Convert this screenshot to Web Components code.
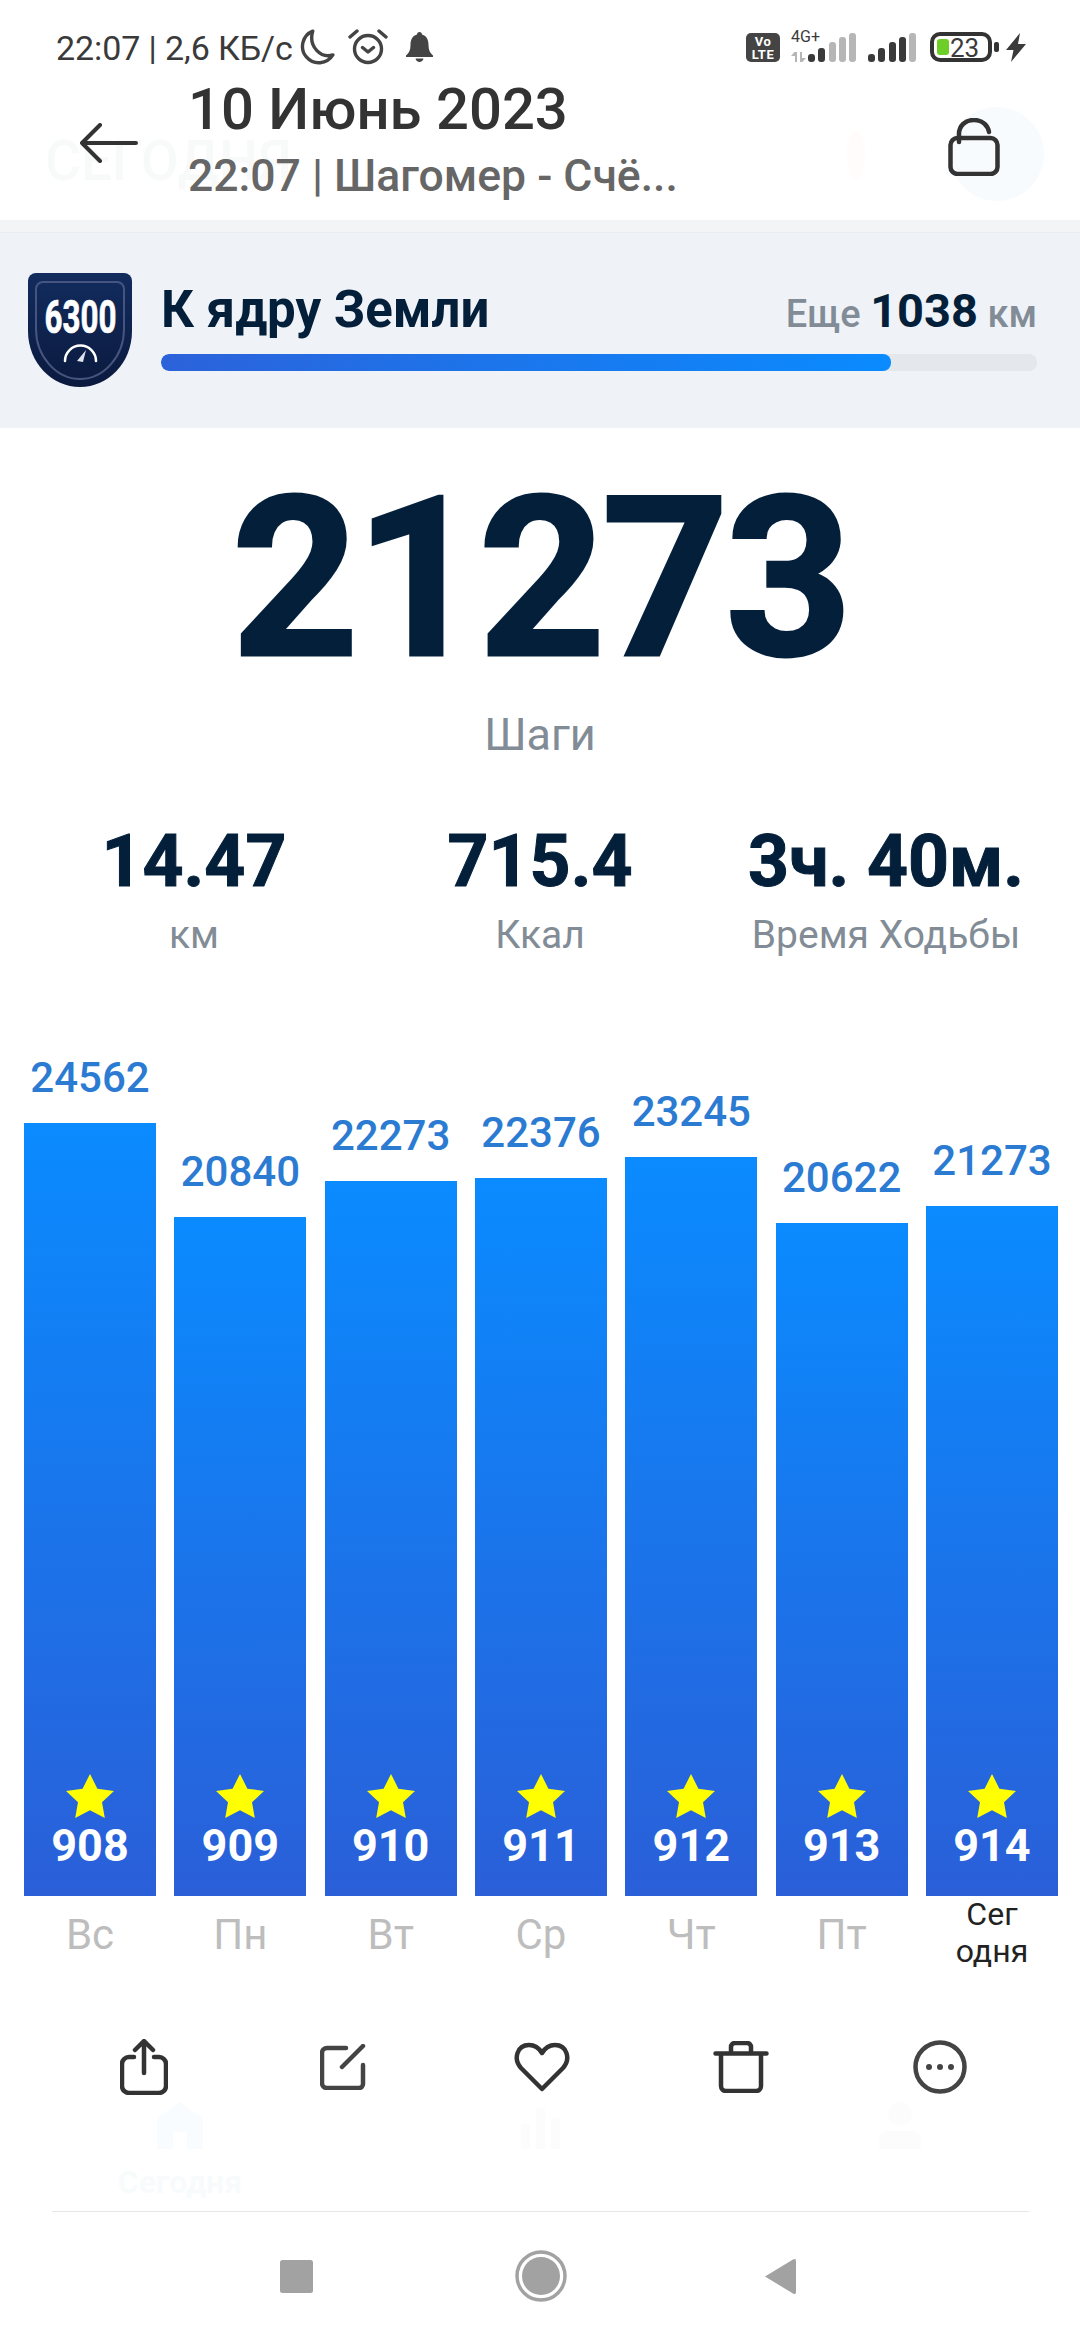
<!DOCTYPE html>
<html lang="ru">
<head>
<meta charset="utf-8">
<title>Шагомер</title>
<style>
   html, body { margin: 0; padding: 0; background: #fff; }
   body { width: 1080px; height: 2340px; overflow: hidden; font-family: Roboto, "Noto Sans", sans-serif; }
   step-screen { display: block; }
</style>
</head>
<body>
<step-screen></step-screen>
<script>
class StatusBar extends HTMLElement {
   constructor() {
      super();
      this.attachShadow({ mode: 'open' })
   }
   connectedCallback() {
      const bars = (dark) => [[0, 8], [10, 14], [21, 20], [31, 25], [41, 29]].map((b, i) =>
         `<rect x="${b[0]}" y="${29 - b[1]}" width="7" height="${b[1]}" rx="3" fill="${i < dark ? '#3a3a3a' : '#b6b6b6'}"/>`).join('');
      this.shadowRoot.innerHTML = /*html*/ `
      <style>
         :host { display: flex; align-items: flex-start; box-sizing: border-box; height: 77px; padding: 28px 54px 0 56px; color: #3a3a3a; position: relative; z-index: 1; }
         .time { font-size: 34px; line-height: 40px; white-space: nowrap; letter-spacing: -0.1px; }
         svg { display: block; flex: none; }
         .moon { margin: 1px 0 0 6px; }
         .alarm { margin: 0 0 0 13px; }
         .bell { margin: 4px 0 0 18px; }
         .right { margin-left: auto; display: flex; align-items: flex-start; padding-top: 5px; }
         .volte { width: 34px; height: 29px; border-radius: 5px; background: #444; color: #fff; font: 700 13px/13px Roboto, sans-serif; text-align: center; padding-top: 2px; box-sizing: border-box; letter-spacing: .5px; }
         .net { position: relative; width: 17px; height: 29px; margin-left: 11px; }
         .net span { position: absolute; left: 0; top: -5px; font-size: 16px; line-height: 18px; }
         .net .arrows { position: absolute; left: 0; top: 19px; }
         .sig { margin-right: 12px; }
         .sig2 { margin-right: 14px; }
         .battery { position: relative; box-sizing: border-box; width: 62px; height: 30px; border: 4px solid #333; border-radius: 10px; font-size: 26px; line-height: 24px; padding-left: 16px; margin-top: -1px; }
         .battery i { position: absolute; left: 3px; top: 3px; width: 12px; height: 16px; background: #6cce26; border-radius: 3px; }
         .battery b { position: relative; font-weight: 400; }
         .nub { width: 5px; height: 10px; background: #333; border-radius: 2px; margin: 9px 0 0 2px; }
         .bolt { margin-left: 7px; }
      </style>
      <span class="time">22:07 | 2,6 КБ/с</span>
      <svg class="moon" width="36" height="36" viewBox="0 0 34 34" fill="none" stroke="#444" stroke-width="3.200" stroke-linejoin="round"><path d="M13 2A15.500 15.500 0 1 0 32 24.500C21 28 8.500 17 13 2Z"/></svg>
      <svg class="alarm" width="40" height="37" viewBox="0 0 40 37" fill="none" stroke="#444" stroke-width="3.400" stroke-linecap="round" stroke-linejoin="round"><circle cx="20" cy="21" r="13.500"/><path d="M14.500 19.500 20 24l5.500-4.500M2 9l7-6M38 9l-7-6"/></svg>
      <svg class="bell" width="27" height="30" viewBox="0 0 27 30" fill="#444"><path d="M13.500 0c1.500 0 2.500 1 2.500 2.500C21 4 22.500 8 22.500 13c0 5 1.500 8 4.500 10.500V25H0v-1.500C3 21 4.500 18 4.500 13 4.500 8 6 4 11 2.500 11 1 12 0 13.500 0ZM9.500 26.500h8c-.5 2-2 3.500-4 3.500s-3.500-1.500-4-3.500Z"/></svg>
      <div class="right">
         <div class="volte">Vo<br>LTE</div>
         <div class="net">
            <span>4G+</span>
            <svg class="arrows" width="15" height="10" viewBox="0 0 15 10" fill="#b6b6b6"><path d="M0 4 3.500 0 6 0 6 10 4 10 4 4ZM15 6l-3.500 4H9V0h2v6Z"/></svg>
         </div>
         <svg class="sig" width="48" height="29" viewBox="0 0 48 29">${bars(2)}</svg>
         <svg class="sig2" width="48" height="29" viewBox="0 0 48 29">${bars(4)}</svg>
         <div class="battery"><i></i><b>23</b></div>
         <div class="nub"></div>
         <svg class="bolt" width="20" height="29" viewBox="0 0 20 29" fill="#3a3a3a"><path d="M14 0 0 17h7.500L5 29 20 11h-8Z"/></svg>
      </div>
      `;
   }
}
window.customElements.define("status-bar", StatusBar);

class AppHeader extends HTMLElement {
   constructor() {
      super();
      this.attachShadow({ mode: 'open' })
   }
   connectedCallback() {
      this.shadowRoot.innerHTML = /*html*/ `
      <style>
         :host { display: flex; align-items: center; box-sizing: border-box; height: 143px; padding: 0 80px; position: relative; }
         .ghost { position: absolute; left: 45px; top: 49px; font-size: 55px; line-height: 70px; font-weight: 500; color: #f8fafa; }
         .halo { position: absolute; left: 950px; top: 30px; width: 94px; height: 94px; border-radius: 50%; background: #f8fbfe; }
         .glow { position: absolute; left: 847px; top: 53px; width: 18px; height: 50px; border-radius: 50%; background: #fffcfb; }
         svg { display: block; flex: none; position: relative; }
         .back { margin-bottom: 11px; }
         .txt { position: relative; margin: 0 0 12px 50px; }
         .title { font-size: 58px; line-height: 64px; font-weight: 500; color: #333; white-space: nowrap; }
         .sub { font-size: 44.500px; line-height: 64px; margin-top: 3px; font-weight: 500; color: #666; white-space: nowrap; }
         .lock { margin: 0 0 3px auto; }
      </style>
      <div class="ghost">СЕГОДНЯ</div>
      <div class="halo"></div>
      <div class="glow"></div>
      <svg class="back" width="58" height="40" viewBox="0 0 58 40" fill="none" stroke="#333" stroke-width="4" stroke-linecap="round" stroke-linejoin="round"><path d="M20 2 2 20l18 18M2 20h54"/></svg>
      <div class="txt">
         <div class="title">10 Июнь 2023</div>
         <div class="sub">22:07 | Шагомер - Счё...</div>
      </div>
      <svg class="lock" width="52" height="58" viewBox="0 0 52 58" fill="none" stroke="#333" stroke-width="4.500" stroke-linecap="round" stroke-linejoin="round"><rect x="2.500" y="20" width="47" height="36" rx="7"/><path d="M11 24V16C11 8 17 2 26 2s14 6 15 12"/></svg>
      `;
   }
}
window.customElements.define("app-header", AppHeader);

class GoalCard extends HTMLElement {
   constructor() {
      super();
      this.attachShadow({ mode: 'open' })
   }
   connectedCallback() {
      this.shadowRoot.innerHTML = /*html*/ `
      <style>
         :host { display: block; }
         .strip { height: 12px; background: #f3f4f6; border-bottom: 1px solid #e9ebee; }
         .card { display: flex; align-items: flex-start; height: 195px; box-sizing: border-box; background: #eff2f7; padding: 40px 43px 0 28px; }
         svg { display: block; flex: none; }
         .main { flex: 1; margin: 7px 0 0 29px; }
         .row { display: flex; justify-content: space-between; align-items: baseline; height: 60px; line-height: 60px; white-space: nowrap; }
         .name { font-size: 51px; font-weight: 700; color: #031f3a; }
         .left { font-size: 38px; font-weight: 500; color: #828c96; }
         .left b { font-size: 47px; font-weight: 700; color: #031f3a; }
         .track { height: 17px; border-radius: 8px; background: #e4e7eb; margin-top: 14px; overflow: hidden; }
         .fill { width: 730px; height: 100%; border-radius: 8px; background: linear-gradient(90deg, #2c62da, #0a8bff); }
      </style>
      <div class="strip"></div>
      <div class="card">
         <svg width="104" height="114" viewBox="0 0 104 114">
            <defs><linearGradient id="b" x1="0" y1="0" x2="0" y2="1"><stop offset="0" stop-color="#122c5e"/><stop offset="1" stop-color="#0b1a3e"/></linearGradient></defs>
            <path d="M8 0h88a8 8 0 0 1 8 8v50c0 32-24 56-52 56S0 90 0 58V8a8 8 0 0 1 8-8Z" fill="url(#b)"/>
            <path d="M15 9h74a7 7 0 0 1 7 7v40c0 27-20 50-44 50S8 83 8 56V16a7 7 0 0 1 7-7Z" fill="none" stroke="#46557f" stroke-width="2"/>
            <text x="52.500" y="60" text-anchor="middle" textLength="72" lengthAdjust="spacingAndGlyphs" font-family="Roboto, sans-serif" font-weight="700" font-size="46" fill="#fff" stroke="#fff" stroke-width=".7">6300</text>
            <path d="M37 88A15.500 15.500 0 0 1 68 88" fill="none" stroke="#fff" stroke-width="2.500" stroke-linecap="round"/>
            <path d="M49 88l9-11-3 12Z" fill="#dfe4ee"/>
         </svg>
         <div class="main">
            <div class="row">
               <span class="name">К ядру Земли</span>
               <span class="left">Еще <b>1038</b> км</span>
            </div>
            <div class="track"><div class="fill"></div></div>
         </div>
      </div>
      `;
   }
}
window.customElements.define("goal-card", GoalCard);

class StepTotal extends HTMLElement {
   constructor() {
      super();
      this.attachShadow({ mode: 'open' })
   }
   connectedCallback() {
      this.shadowRoot.innerHTML = /*html*/ `
      <style>
         :host { display: block; text-align: center; padding-top: 38px; }
         .num { font-size: 222px; line-height: 226px; font-weight: 700; letter-spacing: -4px; -webkit-text-stroke: 3px #031f3a; color: #031f3a; }
         .lbl { font-size: 45px; line-height: 50px; margin-top: 18px; color: #828c96; }
      </style>
      <div class="num">${this.getAttribute('value')}</div>
      <div class="lbl">${this.getAttribute('label')}</div>
      `;
   }
}
window.customElements.define("step-total", StepTotal);

class StatItem extends HTMLElement {
   constructor() {
      super();
      this.attachShadow({ mode: 'open' })
   }
   connectedCallback() {
      this.shadowRoot.innerHTML = /*html*/ `
      <style>
         :host { display: block; text-align: center; white-space: nowrap; }
         .val { font-size: 71.500px; line-height: 76px; font-weight: 700; -webkit-text-stroke: 1px #031f3a; color: #031f3a; }
         .lbl { font-size: 39px; line-height: 46px; margin-top: 12px; color: #828c96; }
      </style>
      <div class="val">${this.getAttribute('value')}</div>
      <div class="lbl">${this.getAttribute('label')}</div>
      `;
   }
}
window.customElements.define("stat-item", StatItem);

class StatRow extends HTMLElement {
   constructor() {
      super();
      this.attachShadow({ mode: 'open' })
   }
   connectedCallback() {
      this.shadowRoot.innerHTML = /*html*/ `
      <style>
         :host { display: grid; grid-template-columns: repeat(3, 346px); padding: 64px 0 0 21px; }
      </style>
      <slot></slot>
      `;
   }
}
window.customElements.define("stat-row", StatRow);

class DayBar extends HTMLElement {
   constructor() {
      super();
      this.attachShadow({ mode: 'open' })
   }
   connectedCallback() {
      this.shadowRoot.innerHTML = /*html*/ `
      <style>
         :host { display: flex; flex-direction: column; justify-content: flex-end; text-align: center; }
         .steps { font-size: 42px; line-height: 50px; margin-bottom: 20px; font-weight: 500; color: #2b7bd3; }
         .bar { display: flex; flex-direction: column; justify-content: flex-end; align-items: center; box-sizing: border-box; padding-bottom: 27px; background: linear-gradient(180deg, #0a8bff, #2a5fd8); }
         svg { display: block; margin-bottom: 5px; }
         .streak { font-size: 45px; line-height: 46px; font-weight: 700; color: #fff; }
      </style>
      <div class="steps">${this.getAttribute('steps')}</div>
      <div class="bar" style="height:${this.getAttribute('height')}px">
         <svg width="48" height="44" viewBox="0 0 48 46" preserveAspectRatio="none" fill="#ffff00"><path d="M24 0l7.400 15.300 16.600 2.400-12 11.900 2.800 16.400L24 38l-14.800 8L12 29.600 0 17.700l16.600-2.400Z"/></svg>
         <div class="streak">${this.getAttribute('streak')}</div>
      </div>
      `;
   }
}
window.customElements.define("day-bar", DayBar);

class WeekChart extends HTMLElement {
   constructor() {
      super();
      this.attachShadow({ mode: 'open' })
   }
   connectedCallback() {
      this.shadowRoot.innerHTML = /*html*/ `
      <style>
         :host { display: block; padding: 0 24px; }
         .bars { display: grid; grid-template-columns: repeat(7, 132px); column-gap: 18.330px; height: 938px; align-items: end; }
         .days { display: grid; grid-template-columns: repeat(7, 132px); column-gap: 18.330px; height: 80px; text-align: center; color: #bdbdbd; font-size: 42px; line-height: 50px; }
         .days span { padding-top: 14px; }
         .days .today { padding-top: 0; color: #222; font-size: 32px; line-height: 37px; }
      </style>
      <div class="bars"><slot></slot></div>
      <div class="days">
         <span>Вс</span><span>Пн</span><span>Вт</span><span>Ср</span><span>Чт</span><span>Пт</span>
         <span class="today">Сег<br>одня</span>
      </div>
      `;
   }
}
window.customElements.define("week-chart", WeekChart);

class ActionBar extends HTMLElement {
   constructor() {
      super();
      this.attachShadow({ mode: 'open' })
   }
   connectedCallback() {
      this.shadowRoot.innerHTML = /*html*/ `
      <style>
         :host { display: grid; grid-template-columns: repeat(5, 199px); height: 80px; margin-top: 51px; padding-left: 44px; align-items: center; justify-items: center; position: relative; z-index: 1; }
         svg { display: block; }
      </style>
      <svg width="48" height="56" viewBox="0 0 48 56" fill="none" stroke="#333" stroke-width="4.500" stroke-linecap="round" stroke-linejoin="round"><path d="M14 18H9a7 7 0 0 0-7 7v22a7 7 0 0 0 7 7h30a7 7 0 0 0 7-7V25a7 7 0 0 0-7-7h-5M24 34V3M15 11l9-9 9 9"/></svg>
      <svg width="46" height="46" viewBox="0 0 46 46" fill="none" stroke="#444" stroke-width="4.500" stroke-linecap="round" stroke-linejoin="round"><path d="M26 4H7a5 5 0 0 0-5 5v30a5 5 0 0 0 5 5h32a4 4 0 0 0 4-4V21M22 23 43 2"/></svg>
      <svg width="56" height="50" viewBox="0 0 56 50" fill="none" stroke="#333" stroke-width="4.500" stroke-linecap="round" stroke-linejoin="round"><path d="M28 47 7 26C-1 17 3 3 15 3c6 0 10 3 13 8 3-5 7-8 13-8 12 0 16 14 8 23Z"/></svg>
      <svg width="56" height="52" viewBox="0 0 56 52" fill="none" stroke="#333" stroke-width="4.500" stroke-linecap="round" stroke-linejoin="round"><path d="M2.500 12.500h51M8 13v32a5 5 0 0 0 5 5h30a5 5 0 0 0 5-5V13M18 12V6a4 4 0 0 1 4-4h12a4 4 0 0 1 4 4v6"/></svg>
      <svg width="54" height="54" viewBox="0 0 54 54"><circle cx="27" cy="27" r="24.500" fill="none" stroke="#444" stroke-width="4.500"/><g fill="#444"><circle cx="16" cy="27" r="3"/><circle cx="27" cy="27" r="3"/><circle cx="38" cy="27" r="3"/></g></svg>
      `;
   }
}
window.customElements.define("action-bar", ActionBar);

class GhostTabs extends HTMLElement {
   constructor() {
      super();
      this.attachShadow({ mode: 'open' })
   }
   connectedCallback() {
      this.shadowRoot.innerHTML = /*html*/ `
      <style>
         :host { display: grid; grid-template-columns: repeat(3, 360px); height: 109px; margin-top: -5px; justify-items: center; align-content: start; text-align: center; }
         svg { display: block; margin: 0 auto; }
         span { display: block; font-size: 32px; line-height: 38px; font-weight: 700; color: #f8fbfc; margin-top: 14px; }
      </style>
      <div>
         <svg width="46" height="47" viewBox="0 0 46 47" fill="#f8fcff"><path d="M23 0 46 16v31H30V30H16v17H0V16Z"/></svg>
         <span>Сегодня</span>
      </div>
      <svg width="46" height="47" viewBox="0 0 46 47" fill="#fcfcfc"><path d="M4 22h9v25H4ZM19 6h9v41h-9ZM34 16h9v31h-9Z"/></svg>
      <svg width="46" height="47" viewBox="0 0 46 47" fill="#fcfcfc"><circle cx="23" cy="12" r="12"/><path d="M2 47V38c0-6 5-9 10-9h22c5 0 10 3 10 9v9Z"/></svg>
      `;
   }
}
window.customElements.define("ghost-tabs", GhostTabs);

class NavBar extends HTMLElement {
   constructor() {
      super();
      this.attachShadow({ mode: 'open' })
   }
   connectedCallback() {
      this.shadowRoot.innerHTML = /*html*/ `
      <style>
         :host { display: block; }
         .line { height: 1px; margin: 0 51px 0 52px; background: #e6e7e8; }
         .keys { display: grid; grid-template-columns: 245px 244px 234px; height: 129px; padding: 0 0 1px 174px; box-sizing: border-box; justify-items: center; align-items: center; }
         svg { display: block; }
      </style>
      <div class="line"></div>
      <div class="keys">
         <svg width="33" height="33" viewBox="0 0 33 33"><rect width="33" height="33" rx="2.500" fill="#a2a2a2"/></svg>
         <svg width="52" height="52" viewBox="0 0 52 52"><circle cx="26" cy="26" r="24" fill="none" stroke="#a2a2a2" stroke-width="3.500"/><circle cx="26" cy="26" r="19" fill="#a2a2a2"/></svg>
         <svg width="32" height="37" viewBox="0 0 32 37"><path d="M1 18.500 29 1.500Q32 0 32 3v31q0 3-3 1.500Z" fill="#a2a2a2"/></svg>
      </div>
      `;
   }
}
window.customElements.define("nav-bar", NavBar);

class StepScreen extends HTMLElement {
   constructor() {
      super();
      this.attachShadow({ mode: 'open' })
   }
   connectedCallback() {
      const days = [
         [24562, 773, 908], [20840, 679, 909], [22273, 715, 910], [22376, 718, 911],
         [23245, 739, 912], [20622, 673, 913], [21273, 690, 914]
      ];
      this.shadowRoot.innerHTML = /*html*/ `
      <style>
         :host { display: block; width: 1080px; height: 2340px; overflow: hidden; background: #fff; }
      </style>
      <status-bar></status-bar>
      <app-header></app-header>
      <goal-card></goal-card>
      <step-total value="21273" label="Шаги"></step-total>
      <stat-row>
         <stat-item value="14.47" label="км"></stat-item>
         <stat-item value="715.4" label="Ккал"></stat-item>
         <stat-item value="3ч. 40м." label="Время Ходьбы"></stat-item>
      </stat-row>
      <week-chart>
         ${days.map(d => `<day-bar steps="${d[0]}" height="${d[1]}" streak="${d[2]}"></day-bar>`).join('')}
      </week-chart>
      <action-bar></action-bar>
      <ghost-tabs></ghost-tabs>
      <nav-bar></nav-bar>
      `;
   }
}
window.customElements.define("step-screen", StepScreen);
</script>
</body>
</html>
